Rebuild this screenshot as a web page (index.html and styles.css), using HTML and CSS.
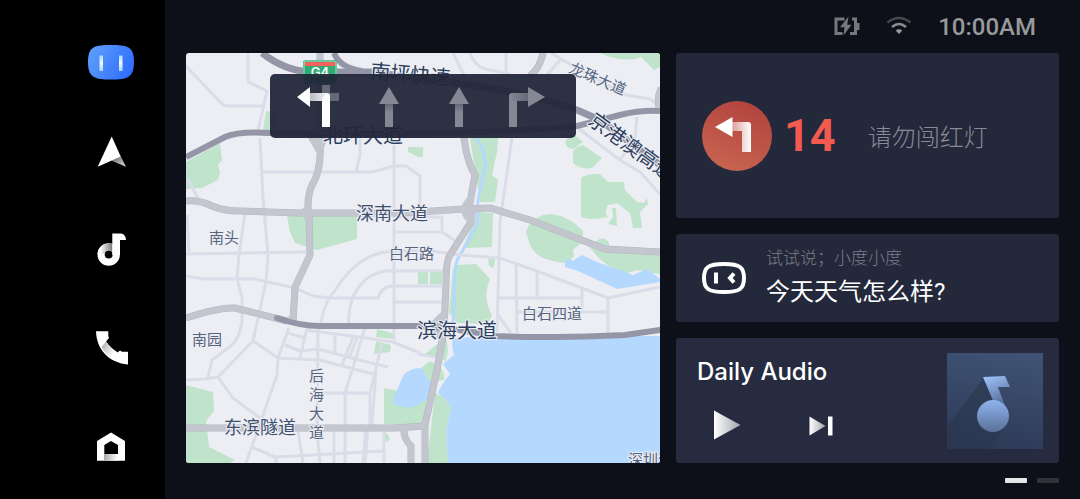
FILE: index.html
```
<!DOCTYPE html>
<html lang="zh-CN">
<head>
  <meta charset="UTF-8">
  <meta name="viewport" content="width=device-width, initial-scale=1.0">
  <title>车载桌面</title>
  <link rel="stylesheet" href="styles.css">
</head>
<body>

  <nav class="sidebar">
    <a class="nav-link assistant" href="#assistant" aria-label="小度">
      <svg width="48" height="36" viewBox="0 0 48 36">
        <defs>
          <linearGradient id="faceBlue" x1="0" y1="0.3" x2="1" y2="0.7">
            <stop offset="0" stop-color="#5b9dfa"/>
            <stop offset="1" stop-color="#2f6cff"/>
          </linearGradient>
          <linearGradient id="eyeBlue" x1="0" y1="0" x2="0" y2="1">
            <stop offset="0" stop-color="#a9dcff"/>
            <stop offset="0.5" stop-color="#f2fbff"/>
            <stop offset="1" stop-color="#a4d4ff"/>
          </linearGradient>
        </defs>
        <path d="M24 1C40 1 47 2 47 18S40 35.500 24 35.500 1 34 1 18 8 1 24 1Z" fill="url(#faceBlue)"/>
        <rect x="12.500" y="11.500" width="3.500" height="15.500" fill="url(#eyeBlue)"/>
        <rect x="32" y="11.500" width="3.500" height="15.500" fill="url(#eyeBlue)"/>
      </svg>
    </a>
    <a class="nav-link" href="#navigation" aria-label="导航">
      <svg width="48" height="48" viewBox="0 0 48 48">
        <defs>
          <linearGradient id="arrowFold" x1="0" y1="0" x2="1" y2="1">
            <stop offset="0" stop-color="#555"/>
            <stop offset="1" stop-color="#ddd"/>
          </linearGradient>
        </defs>
        <path d="M33 27L39 38.700L24 32.500Z" fill="url(#arrowFold)"/>
        <path d="M24.700 8.500L33.700 28.500L10.700 38.700Z" fill="#fff"/>
      </svg>
    </a>
    <a class="nav-link" href="#music" aria-label="音乐">
      <svg width="48" height="48" viewBox="0 0 48 48">
        <defs>
          <linearGradient id="noteFade" x1="0" y1="0" x2="1" y2="0">
            <stop offset="0.2" stop-color="#fff"/>
            <stop offset="1" stop-color="#777"/>
          </linearGradient>
        </defs>
        <circle cx="21.700" cy="28.500" r="7.600" fill="none" stroke="#fff" stroke-width="7.200"/>
        <path d="M10.500 28A11.200 11.200 0 0 1 25.500 18V27A4 4 0 0 0 17.700 28Z" fill="url(#noteFade)"/>
        <path d="M25.300 7.500H34Q38.500 8 39 14H33V29H25.300Z" fill="#fff"/>
      </svg>
    </a>
    <a class="nav-link" href="#phone" aria-label="电话">
      <svg width="48" height="48" viewBox="0 0 48 48">
        <defs>
          <linearGradient id="phoneFade" x1="0" y1="0" x2="1" y2="0.8">
            <stop offset="0" stop-color="#aaa"/>
            <stop offset="0.8" stop-color="#fff"/>
          </linearGradient>
        </defs>
        <path d="M9 7.300H21.300V12L22 14L19 17.500Q24 24.500 30.500 28.500L33 26.500L35 27.700H41V40.500C20 38.500 9.500 24 9 7.300Z" fill="#fff"/>
        <path d="M19 17.500Q24 24.500 30.500 28.500L26 36Q19 31 14.500 23Z" fill="url(#phoneFade)"/>
      </svg>
    </a>
    <a class="nav-link" href="#home" aria-label="主页">
      <svg width="48" height="48" viewBox="0 0 48 48">
        <defs>
          <linearGradient id="homeFade" x1="0" y1="0" x2="1" y2="0">
            <stop offset="0" stop-color="#aaa"/>
            <stop offset="1" stop-color="#fff"/>
          </linearGradient>
        </defs>
        <path d="M24 10.500L38 19V38.700H10V19ZM24 19L17.300 23V32H31V23Z" fill="#fff" fill-rule="evenodd"/>
        <rect x="17" y="32" width="14" height="6.700" fill="url(#homeFade)"/>
      </svg>
    </a>
  </nav>

  <main class="desktop">
    <header class="status-bar">
      <svg width="26" height="22" viewBox="0 0 26 22" aria-label="充电中">
        <path d="M10.500 3H2V17.500H8.500M16 17.500H21.500V3H18" fill="none" stroke="#77787b" stroke-width="3"/>
        <path d="M23 7H25.500V14H23Z" fill="#77787b"/>
        <path d="M14.500 0.500L6 11.300H10.500L9.500 19.500L17.500 8.800H13.200Z" fill="#77787b"/>
      </svg>
      <svg width="26" height="22" viewBox="0 0 26 22" aria-label="无线网络">
        <path d="M1.500 6.500Q13 -2.500 24.500 6.500" fill="none" stroke="#46484d" stroke-width="2.500"/>
        <path d="M6 11Q13 5 20 11" fill="none" stroke="#8b8c8f" stroke-width="2.500"/>
        <path d="M9.700 14.500Q13 12 16.300 14.500L13 18Z" fill="#9a9b9d"/>
      </svg>
      <time class="clock">10:00AM</time>
    </header>

    <div class="cards">
      <section class="map">
        <svg class="map-canvas" viewBox="186 53 474 410" preserveAspectRatio="xMidYMid slice">
          <defs>
            <g id="mainRoads" fill="none">
              <path d="M186 201Q200 200 212 206Q224 211 240 211L300 213H400L465 209L490 208L530 220L605 249L660 252"/>
              <path d="M320 53V138Q322 170 312 185Q306 200 309 215L310 255L295 287L293 322"/>
              <path d="M464 138Q467 162 475 175L469 208L471 222L450 255Q446 260 446 285L444 330L437 370L425 425V463"/>
              <path d="M186 428H395L426 426M404 428Q403 438 411 446V463"/>
              <path d="M186 318Q220 307 235 308L287 321M543 53Q540 68 530 76"/>
              <path d="M661 88Q656 100 660 110"/>
            </g>
          </defs>

          <rect x="186" y="53" width="474" height="410" fill="#edeef4"/>

          <!-- parks -->
          <g fill="#bfe3cb">
            <path d="M186 162L220 143L222 160L218 165L220 173L218 180L202 188L186 189Z"/>
            <path d="M266 111L276 113V131L263 130Z"/>
            <path d="M287 216H357V239L317 250L295 243L290 232Z"/>
            <path d="M408 147H423V157H418L408 152Z"/>
            <path d="M600 53H660V67L654 70L641 57Q630 62 610 57Z"/>
            <path d="M470 138H498L497 152L492 175L498 180L495 202H480Z"/>
            <path d="M477 212L493 213L492 247L463 248Z"/>
            <path d="M565 142L572 133L583 142L573 149Q566 148 565 142Z"/>
            <path d="M573 152Q574 147 583 145L602 158L592 168Q580 170 573 163Z"/>
            <path d="M581 178Q584 174 600 174L608 182H624L625 190L637 202L644 203L647 198L648 204L640 212L642 228H633L630 213L618 204L620 203L608 205Q604 212 608 217Q590 221 581 217Z"/>
            <path d="M612 208H616L617 226L608 224L613 217Z"/>
            <path d="M526 232Q531 216 549 214Q568 215 583 231L582 242L573 250L574 257L562 261Q538 262 530 245Z"/>
            <path d="M590 248Q602 232 609 243V248L660 252V274L637 270L625 274Q605 266 596 255Z"/>
            <path d="M542 253H570L572 261L565 263Q552 262 542 256Z"/>
            <path d="M453 268L457 265L476 264L490 279Q482 298 492 315L488 324L457 323L449 313Z"/>
            <path d="M418 271H428V284H418ZM430 271H442V284H430Z"/>
            <path d="M488 259H495L494 268L489 266Z"/>
            <path d="M377 329L395 334L394 339L376 337Z"/>
            <path d="M376 341L391 345L390 352L374 354Z"/>
            <path d="M384 388L426 396V426L384 424Z"/>
            <path d="M186 385L213 392L214 411L206 421L209 447L235 460L230 463H186Z"/>
            <path d="M384 430L390 438L388 442L384 440Z"/>
            <path d="M446 337L448 350L446 361L434 357L425 354Z"/>
          </g>

          <!-- water -->
          <g fill="#b5d8ff">
            <path d="M453 338L497 336H660V463H448L446 430L451 408L438 392L445 380L450 374L443 364L454 355L452 345Z"/>
            <path d="M393 400L403 376Q411 366 424 369L436 378L431 398L422 402Q412 412 394 404Z"/>
            <path d="M565 259L572 261L582 255L597 262L633 275L648 269L660 279V282L617 289L578 271L565 267Z"/>
            <path d="M475 138Q486 148 485 165L478 200L477 225L459 257Q455 262 455 275L453 325" fill="none" stroke="#b5d8ff" stroke-width="3"/>
          </g>
          <path d="M435 393Q448 398 451 408L446 430L448 463H427Z" fill="#bfe3cb"/>
          <path d="M421 368L430 361Q446 368 444 380L430 382Z" fill="#bfe3cb"/>

          <!-- side streets -->
          <g fill="none" stroke="#dadce7" stroke-width="3" stroke-linejoin="round">
            <path d="M248 53V82L267 91L258 131M186 66L222 104Q225 106 228 106H264"/>
            <path d="M260 138L263 198L268 255L266 282L253 341M263 172H372L394 166H406L420 176V212"/>
            <path d="M356 172L360 155V138M394 137V340"/>
            <path d="M245 213L239 255L237 278L242 298V320Q240 340 228 348L212 360L208 377"/>
            <path d="M187 178L199 200M187 215L189 252M186 254L306 252"/>
            <path d="M186 276L204 279H255L295 288L313 296L330 298H378Q382 286 393 286H442"/>
            <path d="M320 327Q325 300 334 292Q352 262 377 254Q387 250 430 251L461 255L500 258L537 271L582 288L608 298L660 287"/>
            <path d="M348 328Q349 305 354 295Q365 273 387 271H443M395 302H444"/>
            <path d="M512 138L500 222L497 332M516 264L517 333M537 271V298M498 298H582M582 288V312M518 312H608M608 298V333M498 315L511 333"/>
            <path d="M506 53V75M453 53L464 75M470 53Q475 66 485 69L510 74"/>
            <path d="M551 53L580 70L626 95L650 99L660 106M560 60L546 76"/>
            <path d="M578 128L620 160L640 172L660 194M637 117L635 138L620 160"/>
            <path d="M394 217H442V231M394 232H442L457 242"/>
            <path d="M186 380L205 379L218 377L233 398L260 418M218 377L253 341L278 358L320 360L373 374"/>
            <path d="M289 328L278 358L277 375L262 418L246 463"/>
            <path d="M305 330L360 337L393 342L420 353M288 333L305 338M285 345L300 351L318 349L363 361L388 367M306 332L300 358"/>
            <path d="M318 326L317 432L320 463M335 335V352M353 337L342 365M357 338L349 358M365 328L345 393V463"/>
            <path d="M382 343L370 393V425M376 370L372 425M322 393H370M334 430V463M252 447L275 457L383 451M298 430L303 463M276 457V463M384 430V463"/>
            <path d="M367 428L364 463" stroke-width="5"/>
            <path d="M418 354L435 357"/>
          </g>

          <!-- main roads: edge first, fill on top -->
          <use href="#mainRoads" stroke="#b4b6c0" stroke-width="7"/>
          <use href="#mainRoads" stroke="#c3c5cf" stroke-width="6"/>
          <g fill="#c3c5cf">
            <path d="M306 205L299 212L307 222L315 212Z"/>
            <path d="M467 198Q456 209 466 221L474 221L477 208Z"/>
            <path d="M441 312L429 324L440 343L448 332Z"/>
            <path d="M308 138L316 152H322L328 138Z"/>
            <path d="M291 312L286 322H298Z"/>
          </g>

          <!-- expressways -->
          <g fill="none" stroke="#9496a8" stroke-width="6">
            <path d="M262 53Q285 71 310 72H372L430 80Q520 90 577 110L600 120L660 165" stroke-width="7"/>
            <path d="M334 53Q340 68 362 71"/>
            <path d="M186 157L225 137Q238 131 270 133L330 134Q500 134 577 126L620 115Q640 110 660 111"/>
            <path d="M277 318Q300 326 320 326H420Q460 329 495 336Q540 338 600 336L625 335L660 330" stroke-linecap="round"/>
          </g>

          <!-- route shield -->
          <rect x="303" y="60" width="34" height="24" rx="3" fill="#2fac74"/>
          <rect x="304" y="61" width="32" height="22" rx="2" fill="none" stroke="#a8e3c9"/>
          <rect x="305" y="62" width="30" height="4" fill="#f5625d"/>
          <text class="shield" x="320" y="77">G4</text>

          <g class="place">
            <text x="209" y="243">南头</text>
            <text x="192" y="345">南园</text>
            <text x="389" y="259">白石路</text>
            <text x="522" y="319">白石四道</text>
            <text x="628" y="465">深圳湾</text>
            <text x="568" y="72" transform="rotate(23 568 72)">龙珠大道</text>
            <text x="309" y="381">后</text>
            <text x="309" y="400">海</text>
            <text x="309" y="419">大</text>
            <text x="309" y="438">道</text>
          </g>
          <g class="road">
            <text x="224" y="434">东滨隧道</text>
            <text x="356" y="220">深南大道</text>
          </g>
          <g class="highway">
            <text x="417" y="338">滨海大道</text>
            <text x="323" y="143">北环大道</text>
            <text x="370" y="78" transform="rotate(5 370 78)">南坪快速</text>
            <text x="587" y="123" transform="rotate(36 587 123)">京港澳高速</text>
          </g>
        </svg>

        <div class="lanes">
          <svg viewBox="0 0 70 64">
            <defs>
              <linearGradient id="laneOn" x1="0" y1="0" x2="1" y2="0">
                <stop offset="0" stop-color="#b9bac3"/>
                <stop offset="1" stop-color="#fff"/>
              </linearGradient>
              <linearGradient id="laneOff" x1="0" y1="0" x2="0" y2="1">
                <stop offset="0" stop-color="#656977"/>
                <stop offset="0.4" stop-color="#858894"/>
              </linearGradient>
              <linearGradient id="laneTurn" x1="0" y1="0" x2="1" y2="0">
                <stop offset="0" stop-color="#858894"/>
                <stop offset="1" stop-color="#656977"/>
              </linearGradient>
            </defs>
            <path d="M39 11H47V19H56V27H39Z" fill="#656977"/>
            <path d="M27 19H44Q47 19 47 22V29H39V27H27Z" fill="url(#laneOn)"/>
            <path d="M14 23L27 13V33ZM39 27Q39 24 43 20Q47 20 47 22V53H39Z" fill="#fff"/>
          </svg>
          <svg viewBox="0 0 70 64">
            <rect x="32" y="30" width="8" height="23" fill="url(#laneOff)"/>
            <path d="M36 13L46 30H26Z" fill="#858894"/>
          </svg>
          <svg viewBox="0 0 70 64">
            <rect x="32" y="30" width="8" height="23" fill="url(#laneOff)"/>
            <path d="M36 13L46 30H26Z" fill="#858894"/>
          </svg>
          <svg viewBox="0 0 70 64">
            <path d="M16 53V22Q16 19 19 19H35V27H24V53Z" fill="url(#laneTurn)"/>
            <path d="M16 53V27H24V53ZM35 13L52 23L35 33Z" fill="#858894"/>
          </svg>
        </div>
      </section>

      <div class="stack">
        <section class="card signal">
          <svg width="70" height="70" viewBox="0 0 70 70" aria-label="左转红灯">
            <defs>
              <linearGradient id="lightRed" x1="0.7" y1="0" x2="0.3" y2="1">
                <stop offset="0" stop-color="#b2433e"/>
                <stop offset="1" stop-color="#c76550"/>
              </linearGradient>
              <linearGradient id="turnFade" x1="0" y1="0" x2="1" y2="0">
                <stop offset="0" stop-color="#dc9f99"/>
                <stop offset="1" stop-color="#fff"/>
              </linearGradient>
            </defs>
            <circle cx="35" cy="35" r="35" fill="url(#lightRed)"/>
            <path d="M30 21H46Q49 21 49 24V51H40V30H30Z" fill="url(#turnFade)"/>
            <path d="M13 26L30.500 16V36Z" fill="#fff"/>
          </svg>
          <strong class="countdown">14</strong>
          <p class="warning">请勿闯红灯</p>
        </section>

        <section class="card voice">
          <svg width="44" height="32" viewBox="0 0 44 32" aria-label="小度">
            <path d="M22 2Q34 2 38 5Q42 8 42 16T38 27Q34 30 22 30T6 27Q2 24 2 16T6 5Q10 2 22 2Z" fill="none" stroke="#fff" stroke-width="4"/>
            <path d="M14 10.500V21.500" stroke="#fff" stroke-width="4"/>
            <path d="M32 11.500L28 16L32 20.500" fill="none" stroke="#fff" stroke-width="4"/>
          </svg>
          <div class="voice-text">
            <p class="hint">试试说；小度小度</p>
            <p class="question">今天天气怎么样?</p>
          </div>
        </section>

        <section class="card audio">
          <div class="player">
            <h2>Daily Audio</h2>
            <div class="controls">
              <button type="button" aria-label="播放">
                <svg width="28" height="30" viewBox="0 0 28 30">
                  <defs>
                    <linearGradient id="playFade" x1="0" y1="0" x2="1" y2="0">
                      <stop offset="0" stop-color="#fff"/>
                      <stop offset="1" stop-color="#a2a4ab"/>
                    </linearGradient>
                  </defs>
                  <path d="M1 0.500L27.500 15L1 29.500Z" fill="url(#playFade)"/>
                </svg>
              </button>
              <button type="button" aria-label="下一首">
                <svg width="24" height="30" viewBox="0 0 24 30">
                  <path d="M0.500 6.500L16.500 16L0.500 25.500Z" fill="url(#playFade)"/>
                  <rect x="19" y="6.500" width="4.500" height="19" fill="#fff"/>
                </svg>
              </button>
            </div>
          </div>
          <svg class="cover" width="96" height="96" viewBox="0 0 96 96" aria-label="专辑封面">
            <defs>
              <linearGradient id="coverBg" x1="0.6" y1="0" x2="0.4" y2="1">
                <stop offset="0" stop-color="#3f5274"/>
                <stop offset="1" stop-color="#2d3a56"/>
              </linearGradient>
              <linearGradient id="coverShade" x1="0.7" y1="0" x2="0.3" y2="1">
                <stop offset="0" stop-color="#303e58"/>
                <stop offset="1" stop-color="#2b3750"/>
              </linearGradient>
              <linearGradient id="coverBall" x1="0" y1="0" x2="0" y2="1">
                <stop offset="0" stop-color="#8fb3ee"/>
                <stop offset="1" stop-color="#5a7198"/>
              </linearGradient>
              <linearGradient id="coverStem" x1="0" y1="0" x2="0.4" y2="1">
                <stop offset="0" stop-color="#a3c7ff"/>
                <stop offset="1" stop-color="#57709d"/>
              </linearGradient>
            </defs>
            <rect width="96" height="96" fill="url(#coverBg)"/>
            <path d="M36 26L0 74V96H42L60 73L50 45Z" fill="url(#coverShade)"/>
            <path d="M36 24L58 23L63 34H51L58 53L47 50Z" fill="url(#coverStem)"/>
            <circle cx="46" cy="63" r="16" fill="url(#coverBall)"/>
          </svg>
        </section>
      </div>
    </div>

    <footer class="pager">
      <span class="page active"></span>
      <span class="page"></span>
    </footer>
  </main>

</body>
</html>
```
FILE: styles.css
```
* {
  box-sizing: border-box;
}

body {
  margin: 0;
  min-height: 100vh;
  display: flex;
  background: #0d1018;
  color: #fff;
  font-family: Roboto, "Noto Sans CJK SC", sans-serif;
}

h2,
p {
  margin: 0;
}

svg {
  display: block;
  flex-shrink: 0;
}

.sidebar {
  width: 165px;
  padding: 44px 30px 0 87px;
  display: flex;
  flex-direction: column;
  gap: 50px;
  background: #000;
}

.nav-link {
  display: block;
}

.assistant {
  margin-bottom: -2px;
}

.desktop {
  flex: 1;
  display: flex;
  flex-direction: column;
  padding: 0 21px;
}

.status-bar {
  height: 53px;
  padding-right: 23px;
  display: flex;
  align-items: center;
  justify-content: flex-end;
  gap: 26px;
}

.clock {
  color: #98999c;
  font-size: 24px;
  font-weight: 500;
}

.cards {
  flex: 1;
  display: grid;
  grid-template-columns: 474fr 383fr;
  gap: 16px;
}

/* map */
.map {
  position: relative;
  overflow: hidden;
  border-radius: 3px;
}

.map-canvas {
  width: 100%;
  height: 100%;
}

.map-canvas text {
  font-family: "Noto Sans CJK SC", sans-serif;
  paint-order: stroke;
  stroke: #edeef4;
  stroke-width: 2px;
}

.place text {
  font-size: 15px;
  fill: #56657f;
}

.road text {
  font-size: 18px;
  fill: #3f506e;
}

.highway text {
  font-size: 20px;
  fill: #2c3f60;
}

.map-canvas .shield {
  font-family: Inter, sans-serif;
  font-size: 13px;
  font-weight: 600;
  fill: #fff;
  stroke: none;
  text-anchor: middle;
}

.lanes {
  position: absolute;
  top: 21px;
  left: 84px;
  right: 84px;
  padding: 0 13px;
  display: grid;
  grid-template-columns: repeat(4, 1fr);
  background: rgba(34, 38, 57, 0.95);
  border-radius: 5px;
}

.lanes svg {
  width: 100%;
}

/* right column */
.stack {
  display: grid;
  grid-template-rows: 165fr 88fr 125fr;
  gap: 16px;
}

.card {
  display: flex;
  align-items: center;
  background: #23283b;
  border-radius: 3px;
}

.signal {
  padding: 0 26px;
}

.countdown {
  margin: 0 32px 0 12px;
  color: #f55a50;
  font-size: 45px;
  line-height: 48px;
}

.warning {
  color: #888a95;
  font-size: 24px;
  font-weight: 300;
}

.voice {
  padding: 0 26px;
  gap: 20px;
}

.voice-text {
  padding-top: 4px;
}

.hint {
  color: #7b7e89;
  font-size: 17px;
  font-weight: 300;
  line-height: 24px;
}

.question {
  font-size: 24px;
  line-height: 44px;
}

.audio {
  padding: 0 16px 0 21px;
  justify-content: space-between;
  background: #262b3f;
}

.player h2 {
  font-family: Inter, sans-serif;
  font-size: 24px;
  font-weight: 500;
  line-height: 32px;
}

.controls {
  display: flex;
  gap: 68px;
  padding: 22px 0 6px 16px;
}

.controls button {
  padding: 0;
  border: none;
  background: none;
  cursor: pointer;
}

.pager {
  height: 36px;
  padding-bottom: 2px;
  display: flex;
  align-items: center;
  justify-content: flex-end;
  gap: 10px;
}

.page {
  width: 22px;
  height: 5px;
  border-radius: 1px;
  background: #303237;
}

.page.active {
  background: #e6e6e8;
}
```
